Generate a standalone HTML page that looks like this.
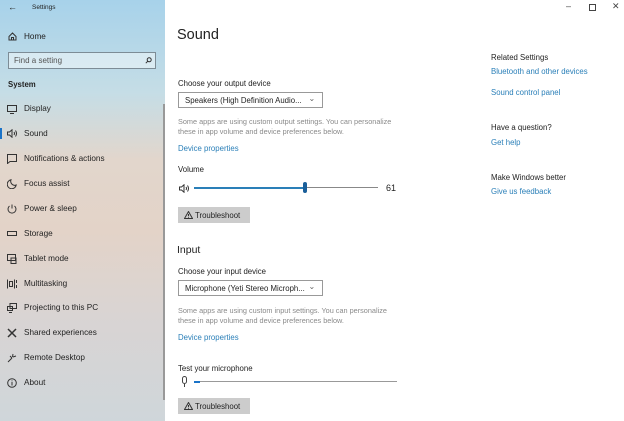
<!DOCTYPE html>
<html><head><meta charset="utf-8"><style>
*{margin:0;padding:0;box-sizing:border-box}
body{width:624px;height:421px;overflow:hidden;font-family:"Liberation Sans",sans-serif;background:#fff;position:relative;color:#222}
.side{position:absolute;left:0;top:0;width:165px;height:421px;background:linear-gradient(180deg,#a7d2ea 0%,#c5dde6 22%,#e2d6cc 38%,#e3d3c8 55%,#d9d4d3 75%,#cfd6da 100%)}
.a{position:absolute;white-space:nowrap}
.nav{font-size:8.2px;color:#222}
.ic{position:absolute;left:7px;width:10px;height:10px}
.link{color:#2a7fb8;font-size:7.8px}
.lbl{font-size:7.8px;color:#222}
.gray{font-size:7.3px;color:#8a8a8a;line-height:10px}
.sel{position:absolute;width:145px;height:16px;border:1.5px solid #999;background:#fff;font-size:7.8px;padding:3px 6px;color:#222}
.sel span{position:absolute;right:7px;top:1px;color:#666}
.btn{position:absolute;width:72px;height:16px;background:#ccc;font-size:7.8px;padding:3.5px 0 0 17px;color:#222}
svg{position:absolute;fill:none;stroke:#333;stroke-width:1}
</style></head><body>
<div class="side">
<div class="a" style="left:8px;top:2px;font-size:9px">←</div>
<div class="a" style="left:32px;top:4px;font-size:6.5px">Settings</div>
<svg style="left:8px;top:32px" width="9" height="9" viewBox="0 0 9 9"><path d="M1 4.5L4.5 1L8 4.5V8H1Z M3.5 8V5.5H5.5V8"/></svg>
<div class="a nav" style="left:24px;top:32px">Home</div>
<div class="a" style="left:8px;top:52px;width:148px;height:17px;border:1px solid #7d8c96;background:rgba(255,255,255,.45);font-size:8px;color:#555;padding:3px 5px">Find a setting</div>
<svg style="left:145px;top:57px" width="7" height="7" viewBox="0 0 7 7"><circle cx="4.2" cy="2.8" r="2"/><path d="M2.8 4.2L0.8 6.2"/></svg>
<div class="a nav" style="left:8px;top:80px;font-weight:bold;font-size:7.8px">System</div>
<div class="a" style="left:163px;top:104px;width:1.5px;height:296px;background:#999"></div>
<div class="a" style="left:0;top:128px;width:2px;height:11px;background:#1a73c8"></div>
<svg style="left:7px;top:105px" width="10" height="9" viewBox="0 0 10 9"><rect x="0.5" y="0.5" width="9" height="6"/><path d="M3 8.5H7"/></svg><div class="a nav" style="left:24px;top:104px">Display</div>
<svg style="left:7px;top:129px" width="11" height="9" viewBox="0 0 11 9"><path d="M0.5 3H2.5L5 0.8V8.2L2.5 6H0.5Z M7 3Q8 4.5 7 6 M8.5 1.5Q10.5 4.5 8.5 7.5"/></svg><div class="a nav" style="left:24px;top:129px">Sound</div>
<svg style="left:7px;top:154px" width="10" height="10" viewBox="0 0 10 10"><path d="M0.5 0.5H9.5V7.5H3L0.5 9.5Z"/></svg><div class="a nav" style="left:24px;top:154px">Notifications &amp; actions</div>
<svg style="left:7px;top:179px" width="10" height="10" viewBox="0 0 10 10"><path d="M4 0.8A4.5 4.5 0 1 0 9.2 6 A4 4 0 0 1 4 0.8Z"/></svg><div class="a nav" style="left:24px;top:179px">Focus assist</div>
<svg style="left:7px;top:204px" width="10" height="10" viewBox="0 0 10 10"><path d="M5 0.5V4.5 M2.5 2A4 4 0 1 0 7.5 2"/></svg><div class="a nav" style="left:24px;top:204px">Power &amp; sleep</div>
<svg style="left:7px;top:231px" width="10" height="6" viewBox="0 0 10 6"><rect x="0.5" y="0.5" width="9" height="4"/></svg><div class="a nav" style="left:24px;top:229px">Storage</div>
<svg style="left:7px;top:254px" width="10" height="10" viewBox="0 0 10 10"><rect x="0.5" y="0.5" width="8" height="6"/><rect x="4" y="4" width="5" height="5.5"/></svg><div class="a nav" style="left:24px;top:254px">Tablet mode</div>
<svg style="left:7px;top:279px" width="10" height="10" viewBox="0 0 10 10"><path d="M0.5 0.5V9.5 M7.5 0.5V9.5 M9.5 1V4 M9.5 6V9"/><rect x="2.5" y="2.5" width="3" height="5"/></svg><div class="a nav" style="left:24px;top:279px">Multitasking</div>
<svg style="left:7px;top:303px" width="10" height="10" viewBox="0 0 10 10"><rect x="3" y="0.5" width="6.5" height="5"/><rect x="0.5" y="3.5" width="5" height="4"/><path d="M2 9.5H5"/></svg><div class="a nav" style="left:24px;top:303px">Projecting to this PC</div>
<svg style="left:7px;top:328px" width="10" height="10" viewBox="0 0 10 10" style="stroke-width:1.4"><path d="M1 1L9 9 M9 1L1 9" stroke-width="1.5"/></svg><div class="a nav" style="left:24px;top:328px">Shared experiences</div>
<svg style="left:7px;top:353px" width="10" height="10" viewBox="0 0 10 10"><path d="M1 9L5 5 M3 3L5 5 M6 1L5.5 4 M9 3L6 4"/></svg><div class="a nav" style="left:24px;top:353px">Remote Desktop</div>
<svg style="left:7px;top:378px" width="10" height="10" viewBox="0 0 10 10"><circle cx="5" cy="5" r="4.3"/><path d="M5 4V7.5 M5 2.5V3.2"/></svg><div class="a nav" style="left:24px;top:378px">About</div>
</div>

<div class="a" style="left:566px;top:1px;font-size:9px;color:#444">–</div>
<div class="a" style="left:589px;top:4px;width:7px;height:7px;border:1px solid #444"></div>
<div class="a" style="left:612px;top:1px;font-size:9px;color:#444">✕</div>

<div class="a" style="left:177px;top:27px;font-size:14.5px;color:#222">Sound</div>
<div class="a lbl" style="left:178px;top:79px">Choose your output device</div>
<div class="sel" style="left:178px;top:92px">Speakers (High Definition Audio...<span>⌄</span></div>
<div class="a gray" style="left:178px;top:117px">Some apps are using custom output settings. You can personalize<br>these in app volume and device preferences below.</div>
<div class="a link" style="left:178px;top:144px">Device properties</div>
<div class="a lbl" style="left:178px;top:165px">Volume</div>
<svg style="left:179px;top:184px" width="11" height="9" viewBox="0 0 11 9"><path d="M0.5 3H2.5L5 0.8V8.2L2.5 6H0.5Z M7 3Q8 4.5 7 6 M8.5 1.5Q10.5 4.5 8.5 7.5"/></svg>
<div class="a" style="left:194px;top:187px;width:111px;height:2px;background:#2a7fb8"></div>
<div class="a" style="left:305px;top:187px;width:73px;height:1px;background:#888"></div>
<div class="a" style="left:303px;top:182px;width:4px;height:11px;background:#1a5f9a;border-radius:2px"></div>
<div class="a" style="left:386px;top:183px;font-size:9px">61</div>
<div class="btn" style="left:178px;top:207px">Troubleshoot</div>
<svg style="left:184px;top:211px" width="9" height="8" viewBox="0 0 9 8"><path d="M4.5 0.5L8.5 7.5H0.5Z M4.5 3V5.2 M4.5 6V6.6"/></svg>

<div class="a" style="left:177px;top:244px;font-size:10.5px">Input</div>
<div class="a lbl" style="left:178px;top:267px">Choose your input device</div>
<div class="sel" style="left:178px;top:280px">Microphone (Yeti Stereo Microph...<span>⌄</span></div>
<div class="a gray" style="left:178px;top:306px">Some apps are using custom input settings. You can personalize<br>these in app volume and device preferences below.</div>
<div class="a link" style="left:178px;top:333px">Device properties</div>
<div class="a lbl" style="left:178px;top:364px">Test your microphone</div>
<div class="a" style="left:182px;top:376px;width:5px;height:8px;border:1px solid #444;border-radius:3px"></div>
<div class="a" style="left:184px;top:384px;width:1px;height:3px;background:#444"></div>
<div class="a" style="left:194px;top:381px;width:6px;height:2px;background:#1a73c8"></div>
<div class="a" style="left:200px;top:381px;width:197px;height:1px;background:#999"></div>
<div class="btn" style="left:178px;top:398px">Troubleshoot</div>
<svg style="left:184px;top:402px" width="9" height="8" viewBox="0 0 9 8"><path d="M4.5 0.5L8.5 7.5H0.5Z M4.5 3V5.2 M4.5 6V6.6"/></svg>

<div class="a lbl" style="left:491px;top:53px">Related Settings</div>
<div class="a link" style="left:491px;top:67px">Bluetooth and other devices</div>
<div class="a link" style="left:491px;top:88px">Sound control panel</div>
<div class="a lbl" style="left:491px;top:123px">Have a question?</div>
<div class="a link" style="left:491px;top:138px">Get help</div>
<div class="a lbl" style="left:491px;top:173px">Make Windows better</div>
<div class="a link" style="left:491px;top:187px">Give us feedback</div>
</body></html>
